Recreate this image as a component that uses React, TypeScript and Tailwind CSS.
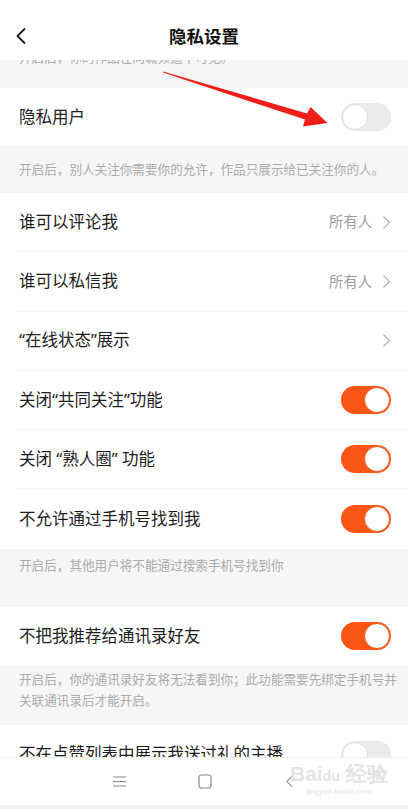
import React from "react";

const font = { fontFamily: '"Noto Sans", "Noto Sans CJK SC", sans-serif' };

function Toggle({ on }: { on: boolean }) {
  return on ? (
    <div className="flex h-[28px] w-[50px] shrink-0 items-center justify-end rounded-full bg-[#fc5617] pr-[1px]">
      <div className="h-[26px] w-[26px] rounded-full border-[1.5px] border-[#f0601f] bg-white" />
    </div>
  ) : (
    <div className="flex h-[28px] w-[50px] shrink-0 items-center justify-start rounded-full bg-[#ebebeb] pl-[1px]">
      <div className="h-[26px] w-[26px] rounded-full border border-[#dcdcdc] bg-white" />
    </div>
  );
}

function Chevron() {
  return (
    <svg width="9" height="15" viewBox="0 0 9 15" className="shrink-0">
      <path d="M1.5 1.5 L7.5 7.5 L1.5 13.5" fill="none" stroke="#b5b5b5" strokeWidth="1.3" />
    </svg>
  );
}

function Row({
  label,
  value,
  chevron,
  toggle,
  divider = true,
}: {
  label: string;
  value?: string;
  chevron?: boolean;
  toggle?: boolean;
  divider?: boolean;
}) {
  return (
    <div className="bg-white pl-[16px]">
      <div
        className={`flex h-[59.3px] items-center justify-between pl-[3px] pr-[17px] ${
          divider ? "border-b border-[#f0f0f0]" : ""
        }`}
      >
        <span className="whitespace-nowrap text-[16.5px] text-[#1c1c1c]">{label}</span>
        <div className="flex items-center gap-[10px]">
          {value && <span className="text-[14.3px] text-[#9c9c9c]">{value}</span>}
          {chevron && <Chevron />}
          {toggle !== undefined && <Toggle on={toggle} />}
        </div>
      </div>
    </div>
  );
}

function Note({ children, h }: { children: React.ReactNode; h: string }) {
  return (
    <div className={`whitespace-nowrap bg-[#f6f6f6] pl-[19px] text-[12.6px] leading-[21px] text-[#ababab] ${h}`}>
      {children}
    </div>
  );
}

export default function App() {
  return (
    <div className="relative flex h-[809px] w-[408px] flex-col overflow-hidden bg-white" style={font}>
      {/* header */}
      <div className="relative z-10 flex h-[60px] shrink-0 items-center justify-center bg-white">
        <svg width="12" height="18" viewBox="0 0 12 18" className="absolute left-[15px] top-[27px]">
          <path d="M10 1.5 L2.5 9 L10 16.5" fill="none" stroke="#1a1a1a" strokeWidth="1.8" />
        </svg>
        <span className="mt-[12px] text-[17.5px] font-bold text-[#111]">隐私设置</span>
      </div>

      {/* content */}
      <div className="flex-1 overflow-hidden">
        <div className="h-[28px] overflow-hidden bg-[#f6f6f6] px-[19px]">
          <div className="-mt-[11px] text-[12.6px] leading-[18px] text-[#ababab]">
            开启后，你的作品在同城频道不可见。
          </div>
        </div>

        <div className="bg-white pl-[19px] pr-[17px]">
          <div className="flex h-[58px] items-center justify-between">
            <span className="text-[16.5px] text-[#1c1c1c]">隐私用户</span>
            <Toggle on={false} />
          </div>
        </div>

        <Note h="flex h-[47px] items-center">开启后，别人关注你需要你的允许，作品只展示给已关注你的人。</Note>

        <Row label="谁可以评论我" value="所有人" chevron />
        <Row label="谁可以私信我" value="所有人" chevron />
        <Row label="“在线状态”展示" chevron />
        <Row label="关闭“共同关注”功能" toggle />
        <Row label="关闭 “熟人圈” 功能" toggle />
        <Row label="不允许通过手机号找到我" toggle divider={false} />

        <Note h="h-[58px] pt-[6px]">开启后，其他用户将不能通过搜索手机号找到你</Note>

        <Row label="不把我推荐给通讯录好友" toggle divider={false} />

        <Note h="h-[59px] pt-[3px]">
          开启后，你的通讯录好友将无法看到你；此功能需要先绑定手机号并
          <br />
          关联通讯录后才能开启。
        </Note>

        <Row label="不在点赞列表中展示我送过礼的主播" toggle={false} divider={false} />
      </div>

      {/* nav bar */}
      <div className="relative z-10 flex h-[48px] shrink-0 items-center border-t border-[#f0f0f0] bg-white pl-[77px]">
        <div className="flex w-[85px] justify-center">
          <svg width="13" height="11" viewBox="0 0 13 11">
            <path d="M0 1 H13 M0 5.5 H13 M0 10 H13" stroke="#8a8a8a" strokeWidth="1.1" />
          </svg>
        </div>
        <div className="flex w-[85px] justify-center">
          <svg width="14" height="15" viewBox="0 0 14 15">
            <rect x="1" y="1" width="12" height="13" rx="2.5" fill="none" stroke="#8a8a8a" strokeWidth="1.2" />
          </svg>
        </div>
        <div className="flex w-[85px] justify-center">
          <svg width="7" height="13" viewBox="0 0 7 13">
            <path d="M6 1 L1 6.5 L6 12" fill="none" stroke="#8a8a8a" strokeWidth="1.1" />
          </svg>
        </div>

        {/* watermark */}
        <div className="absolute left-[290px] top-[5px] flex flex-col items-center leading-none text-[#e4e4e4]">
          <span className="text-[21px] font-bold" style={{ fontFamily: '"Liberation Sans", sans-serif' }}>
            Bai<span className="text-[14px]">du</span> 经验
          </span>
          <span className="mt-[4px] text-[8px]" style={{ fontFamily: '"Liberation Sans", sans-serif' }}>
            jingyan.baidu.com
          </span>
        </div>
      </div>
      <div className="h-[4px] shrink-0 bg-[#f2f2f2]" />

      {/* red annotation arrow */}
      <svg className="pointer-events-none absolute left-0 top-0 z-20" width="408" height="809">
        <polygon
          points="163,71.4 307,113.4 310.5,107 327.5,123 303,126.5 305,119.6 163,72.6"
          fill="#f01e17"
        />
      </svg>
    </div>
  );
}
